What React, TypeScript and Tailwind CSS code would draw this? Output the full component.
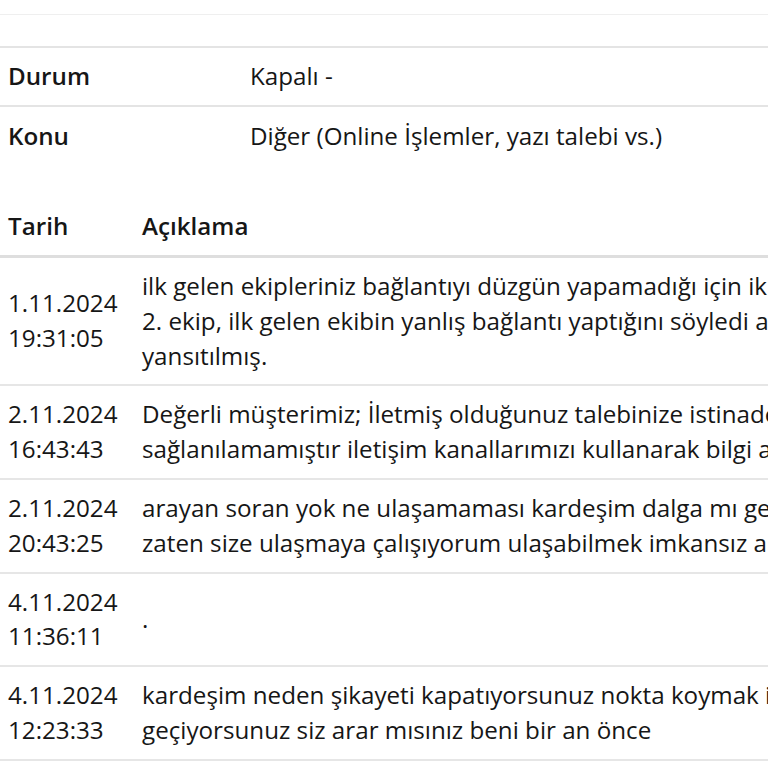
const rows = [
  {
    date: '1.11.2024',
    time: '19:31:05',
    lines: [
      'ilk gelen ekipleriniz bağlantıyı düzgün yapamadığı için ikinci ekip geldi.',
      '2. ekip, ilk gelen ekibin yanlış bağlantı yaptığını söyledi ama sisteme',
      'yansıtılmış.',
    ],
  },
  {
    date: '2.11.2024',
    time: '16:43:43',
    lines: [
      'Değerli müşterimiz; İletmiş olduğunuz talebinize istinaden size ulaşım',
      'sağlanılamamıştır iletişim kanallarımızı kullanarak bilgi alabilirsiniz.',
    ],
  },
  {
    date: '2.11.2024',
    time: '20:43:25',
    lines: [
      'arayan soran yok ne ulaşamaması kardeşim dalga mı geçiyorsunuz',
      'zaten size ulaşmaya çalışıyorum ulaşabilmek imkansız artık',
    ],
  },
  {
    date: '4.11.2024',
    time: '11:36:11',
    lines: ['.'],
  },
  {
    date: '4.11.2024',
    time: '12:23:33',
    lines: [
      'kardeşim neden şikayeti kapatıyorsunuz nokta koymak ile dalga mı',
      'geçiyorsunuz siz arar mısınız beni bir an önce',
    ],
  },
];

const App = () => {
  return (
    <div className="w-full h-[768px] overflow-hidden bg-white">
      <div className="w-[1100px] font-['Open_Sans',sans-serif] text-[24.2px] leading-[34.5px] text-[#161616]">
        <div className="h-[15px] border-b border-[#efefef]" />
        <div className="h-[33px] border-b-2 border-[#e4e4e4]" />

        <div className="flex items-center h-[59px] border-b-2 border-[#e4e4e4]">
          <div className="w-[250px] pl-2 font-semibold">Durum</div>
          <div>Kapalı -</div>
        </div>
        <div className="flex items-center h-[59px]">
          <div className="w-[250px] pl-2 font-semibold">Konu</div>
          <div>Diğer (Online İşlemler, yazı talebi vs.)</div>
        </div>

        <div className="mt-[31px]">
          <div className="flex items-center h-[61px] border-b-[3px] border-[#dedede] font-semibold">
            <div className="w-[142px] pl-2">Tarih</div>
            <div>Açıklama</div>
          </div>
          {rows.map((row, i) => (
            <div key={i} className="flex items-center min-h-[93px] py-[11px] border-b-2 border-[#e6e6e6] leading-[34.8px]">
              <div className="w-[142px] pl-2 shrink-0">
                <div>{row.date}</div>
                <div>{row.time}</div>
              </div>
              <div className="whitespace-nowrap">
                {row.lines.map((line, j) => (
                  <div key={j}>{line}</div>
                ))}
              </div>
            </div>
          ))}
        </div>
      </div>
    </div>
  );
};

export default App;
